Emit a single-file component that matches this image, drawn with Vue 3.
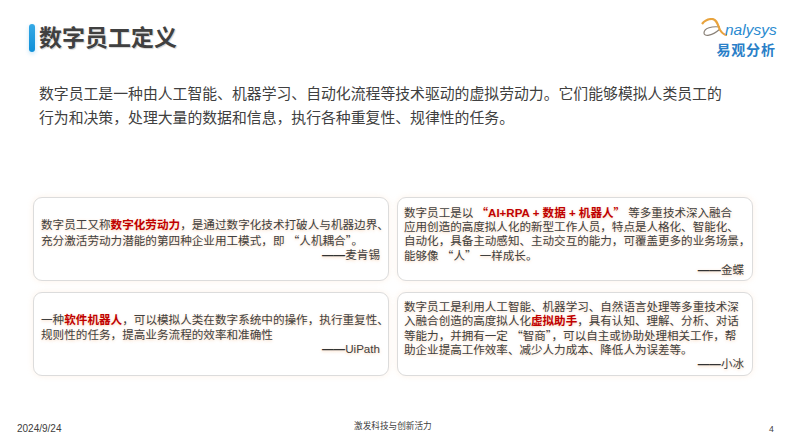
<script setup>
const cards = [
  { id: 1, kind: 'centered', lines: [
    [['数字员工又称'], ['数字化劳动力', 1], ['，是通过数字化技术打破人与机器边界、']],
    [['充分激活劳动力潜能的第四种企业用工模式，即 “人机耦合”。']],
  ], by: '麦肯锡' },
  { id: 2, kind: 'filled', lines: [
    [['数字员工是以 '], ['“AI+RPA + 数据 + 机器人”', 1], [' 等多重技术深入融合']],
    [['应用创造的高度拟人化的新型工作人员，特点是人格化、智能化、']],
    [['自动化，具备主动感知、主动交互的能力，可覆盖更多的业务场景，']],
    [['能够像 “人” 一样成长。']],
  ], by: '金蝶' },
  { id: 3, kind: 'centered', lines: [
    [['一种'], ['软件机器人', 1], ['，可以模拟人类在数字系统中的操作，执行重复性、']],
    [['规则性的任务，提高业务流程的效率和准确性']],
  ], by: 'UiPath' },
  { id: 4, kind: 'filled', lines: [
    [['数字员工是利用人工智能、机器学习、自然语言处理等多重技术深']],
    [['入融合创造的高度拟人化'], ['虚拟助手', 1], ['，具有认知、理解、分析、对话']],
    [['等能力，并拥有一定 “智商”，可以自主或协助处理相关工作，帮']],
    [['助企业提高工作效率、减少人力成本、降低人为误差等。']],
  ], by: '小冰' },
]
const tokens = (s) => s.split(/(?<=[“”])|(?=[“”])/)
const isQuote = (s) => s === '“' || s === '”'
</script>

<template>
  <div class="page">
    <header class="head">
      <div class="title-wrap">
        <span class="bar"></span>
        <h1 class="title">数字员工定义</h1>
      </div>
      <div class="logo">
        <div class="logo-top">
          <svg class="logo-a" width="28" height="20" viewBox="0 0 28 20">
            <path d="M20 9 C12 8 4 10 4 15 C4 19 12 18 20 11" fill="none" stroke="#8a8178" stroke-width="1.2"/>
            <path d="M2 6 C5 2 9 1 12 1 C17 1 18 8 20 12 C22 15 25 17 27 17" fill="none" stroke="#e8a33d" stroke-width="2.2"/>
          </svg>
          <span class="logo-en">nalysys</span>
        </div>
        <div class="logo-cn">易观分析</div>
      </div>
    </header>

    <p class="intro">数字员工是一种由人工智能、机器学习、自动化流程等技术驱动的虚拟劳动力。它们能够模拟人类员工的<br>行为和决策，处理大量的数据和信息，执行各种重复性、规律性的任务。</p>

    <section class="grid">
      <article v-for="c in cards" :key="c.id" class="card" :class="c.kind">
        <div v-for="(line, n) in c.lines" :key="n" class="line">
          <component :is="p[1] ? 'b' : 'span'" v-for="(p, i) in line" :key="i" :class="{ hl: p[1] }"><template v-for="(t, k) in tokens(p[0])" :key="k"><span v-if="isQuote(t)" class="q">{{ t }}</span><template v-else>{{ t }}</template></template></component>
        </div>
        <p class="by"><span class="dash">——</span>{{ c.by }}</p>
      </article>
    </section>

    <footer class="foot">
      <span class="date">2024/9/24</span>
      <span class="slogan">激发科技与创新活力</span>
      <span class="num">4</span>
    </footer>
  </div>
</template>

<style scoped>
.page {
  width: 793px;
  height: 446px;
  background: #fff;
  overflow: hidden;
  font-family: "Liberation Sans", "Noto Sans CJK SC", sans-serif;
  color: #404040;
  display: flex;
  flex-direction: column;
}
.head {
  display: flex;
  justify-content: space-between;
  height: 64px;
  padding: 16px 13px 0 29px;
  box-sizing: border-box;
}
.title-wrap {
  display: flex;
  align-items: center;
  gap: 4px;
  height: 44px;
}
.bar {
  width: 6px;
  height: 28px;
  border-radius: 3px;
  background: linear-gradient(180deg, #35a9e6, #0f8fd8);
  box-shadow: 0 2px 4px rgba(30, 150, 220, .25);
}
.title {
  margin: 0;
  font-size: 23px;
  line-height: 28px;
  font-weight: 700;
  color: #404040;
  text-shadow: 1px 1px 1px rgba(0, 0, 0, .18);
}
.logo {
  width: 80px;
  margin-top: 2px;
}
.logo-top {
  display: flex;
  align-items: flex-end;
  height: 20px;
}
.logo-a {
  flex: none;
  margin-right: -3px;
}
.logo-en {
  font-style: italic;
  font-size: 15.5px;
  line-height: 16px;
  color: #2b8bd0;
}
.logo-cn {
  margin: 4px 0 0 16.5px;
  font-size: 14px;
  line-height: 16px;
  font-weight: 700;
  color: #2a7fc8;
  letter-spacing: .8px;
  white-space: nowrap;
}
.intro {
  margin: 18px 0 0 39px;
  font-size: 14.85px;
  line-height: 24px;
  white-space: nowrap;
  color: #404040;
}
.grid {
  display: grid;
  grid-template-columns: 356px 356px;
  grid-template-rows: 84px 84px;
  gap: 11px 8px;
  margin: 67px 0 0 33px;
}
.card {
  box-sizing: border-box;
  border: 1px solid #dcdcdc;
  border-radius: 9px;
  background: #fff;
  box-shadow: 0 0 6px rgba(245, 190, 140, .2);
  color: #404040;
  text-shadow: 0 1px 3px rgba(240, 160, 90, .45);
}
.card.centered {
  padding: 20px 8px 0 7px;
  font-size: 11.6px;
  line-height: 14.5px;
}
.card.filled {
  padding: 7px 8px 0 6px;
  font-size: 11.55px;
  line-height: 14px;
}
.line {
  white-space: nowrap;
}
.q {
  font-family: "Noto Sans CJK SC", sans-serif;
}
.hl {
  color: #c00000;
  font-weight: 700;
}
.by {
  margin: 0;
  text-align: right;
}
.dash {
  font-weight: 700;
  color: #333;
}
.foot {
  position: relative;
  margin-top: 46px;
  height: 14px;
  font-size: 8.65px;
  line-height: 14px;
  color: #404040;
}
.date {
  position: absolute;
  left: 17px;
  top: 0;
  font-size: 10px;
}
.slogan {
  position: absolute;
  left: 354px;
  top: -3px;
}
.num {
  position: absolute;
  left: 769px;
  top: 0;
}
</style>
